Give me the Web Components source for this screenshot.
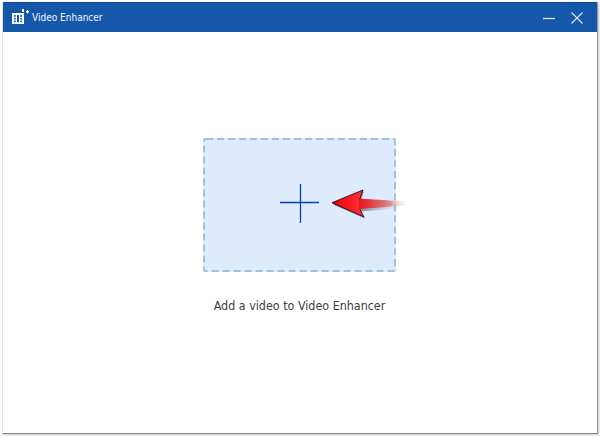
<!DOCTYPE html>
<html><head><meta charset="utf-8"><style>
html,body{margin:0;padding:0;background:#fff}
body{width:600px;height:436px;overflow:hidden;font-family:"DejaVu Sans Condensed","DejaVu Sans",sans-serif}
</style></head><body>
<app-window title-text="Video Enhancer">
  <drop-zone label="Add a video to Video Enhancer"></drop-zone>
</app-window>
<script>
class TitleBar extends HTMLElement{
  constructor(){super();const s=this.attachShadow({mode:'open'});
  s.innerHTML=`<style>
  :host{display:flex;align-items:center;height:29px;background:#1557a8;color:#fff;border-top:1px solid #0f4a97;font-size:10px;padding:0 14px 0 9px;flex:none}
  svg{display:block;flex:none}
  .logo{margin-bottom:3px}
  .name{margin-left:2px;flex:1;color:#f2f6fc}
  .ctrl{display:flex;align-items:center;gap:15px}
  </style>
  <svg class="logo" width="18" height="16" viewBox="0 0 18 16"><path fill="#fff" d="M0 5h12v11H0zM10 1h2v3h-2zM14 3h3v1.500h-3zM15 2h1v3.500h-1z"/><path fill="#1557a8" d="M2 7h1.700v1.700H2zM2 9.800h1.700v1.700H2zM2 12.500h1.700v1.700H2zM5 7h2v7.200H5zM8.300 7H10v1.700H8.300zM8.300 9.800H10v1.700H8.300zM8.300 12.500H10v1.700H8.300z"/></svg>
  <span class="name"><slot></slot></span>
  <span class="ctrl">
  <svg width="14" height="12" viewBox="0 0 14 12"><path d="M1 6.500h12" stroke="#dfe9f6" stroke-width="1.300"/></svg>
  <svg width="12" height="12" viewBox="0 0 12 12"><path d="M.5.500l11 11M11.500.500l-11 11" stroke="#dfe9f6" stroke-width="1.100" fill="none"/></svg>
  </span>`;}
}
class AppWindow extends HTMLElement{
  constructor(){super();const s=this.attachShadow({mode:'open'});
  s.innerHTML=`<style>
  :host{display:flex;flex-direction:column;box-sizing:border-box;width:596px;height:432px;margin:2px 0 0 2px;background:#fff;border-right:1px solid #9a9a9a;border-bottom:1px solid #8c8c8c;border-left:1px solid #e4e4e4;box-shadow:1px 1px 2px rgba(0,0,0,.25)}
  main{flex:1;display:flex;flex-direction:column;align-items:center;padding:106px 1px 0 0}
  </style>
  <title-bar></title-bar><main><slot></slot></main>`;
  s.querySelector('title-bar').textContent=this.getAttribute('title-text');}
}
class DropZone extends HTMLElement{
  constructor(){super();const s=this.attachShadow({mode:'open'});
  s.innerHTML=`<style>
  :host{display:flex;flex-direction:column;align-items:center;color:#3d3d3d}
  .box{position:relative;display:flex;align-items:center;justify-content:center;box-sizing:border-box;width:193px;height:134px;background:#deebfc;}
  .box>svg.border{position:absolute;inset:0}
  .plus{display:block;position:relative;top:-3px;margin-left:1px;overflow:visible}
  .arrow{position:absolute;left:127px;top:44px}
  p{margin:26px 0 0;font-size:12.4px;line-height:16px;white-space:nowrap}
  </style>
  <div class="box">
    <svg class="border" width="193" height="134"><rect x="1" y="1" width="191" height="132" rx="2" fill="none" stroke="#a5bfe0" stroke-width="2" stroke-dasharray="7 4"/></svg>
    <svg class="plus" width="40" height="40" viewBox="0 0 40 40"><path d="M20.500 2v39M0 20.500h39" stroke="#0a3fb4" stroke-width="1.300"/></svg>
    <svg class="arrow" width="80" height="44" viewBox="0 0 80 44">
      <defs>
        <linearGradient id="t" x1="30" x2="78" y1="0" y2="0" gradientUnits="userSpaceOnUse"><stop offset="0" stop-color="#f0141e"/><stop offset=".5" stop-color="#d87074"/><stop offset="1" stop-color="#e0c8c8" stop-opacity="0"/></linearGradient>
        <linearGradient id="h" x1="2" x2="34" y1="0" y2="0" gradientUnits="userSpaceOnUse"><stop offset="0" stop-color="#e8000c"/><stop offset=".6" stop-color="#ff1c22"/><stop offset="1" stop-color="#f03a44"/></linearGradient>
        <linearGradient id="s" x1="28" x2="66" y1="0" y2="0" gradientUnits="userSpaceOnUse"><stop offset="0" stop-color="#444" stop-opacity=".6"/><stop offset="1" stop-color="#888" stop-opacity="0"/></linearGradient>
        <filter id="b" x="-10%" y="-20%" width="120%" height="140%"><feGaussianBlur stdDeviation=".7"/></filter>
      </defs>
      <path d="M2 21 33 8 30 16 76 19V24L30 28 34 35z" fill="url(#s)" transform="translate(1 1.500)" filter="url(#b)"/>
      <path d="M28 16.500 78 19.500V23.500L28 27z" fill="url(#t)"/>
      <path d="M2 20.700 33 8 30 16.500V27.500L34 35z" fill="url(#h)" stroke="#1c1014" stroke-width=".9" stroke-linejoin="round"/>
      <path d="M29 17.200 62 19.500V23.500L29 27z" fill="url(#t)"/>
    </svg>
  </div>
  <p></p>`;
  s.querySelector('p').textContent=this.getAttribute('label');}
}
customElements.define('title-bar',TitleBar);
customElements.define('drop-zone',DropZone);
customElements.define('app-window',AppWindow);
</script>
</body></html>
